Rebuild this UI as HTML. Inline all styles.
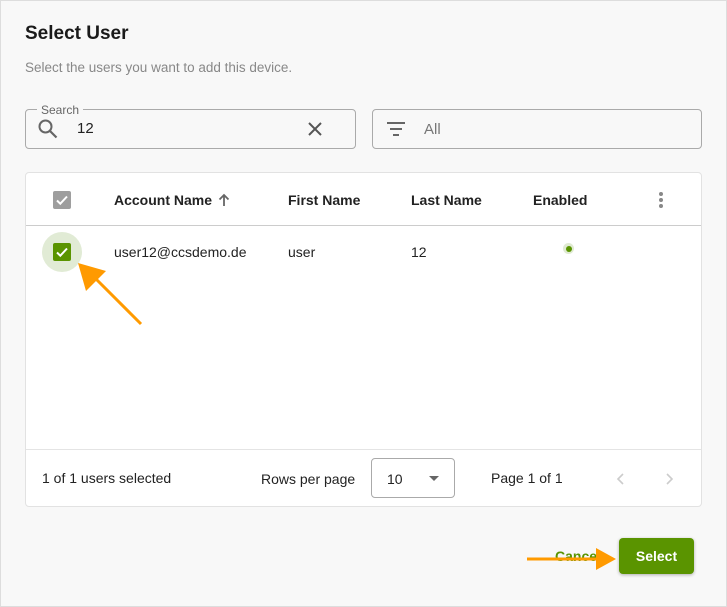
<!DOCTYPE html>
<html><head><style>
*{box-sizing:border-box;margin:0;padding:0}
body{width:727px;height:607px;background:#f8f8f8;font-family:"Liberation Sans",Arial,sans-serif;color:#222;position:relative;overflow:hidden}
.a{position:absolute}
.t{font-size:14px}
</style></head><body>
<div class="a" style="left:0;top:0;width:727px;height:607px;border:1px solid #ddd"></div>
<div class="a" style="left:25px;top:23px;font-size:19px;font-weight:bold;color:#1a1a1a">Select User</div>
<div class="a" style="left:25px;top:60px;font-size:13.5px;color:#888">Select the users you want to add this device.</div>

<div class="a" style="left:25px;top:109px;width:331px;height:40px;border:1px solid #aaa;border-radius:4px"></div>
<div class="a" style="left:37px;top:103px;padding:0 4px;background:#f8f8f8;font-size:12px;color:#666">Search</div>
<svg class="a" style="left:36px;top:117px" width="24" height="24" viewBox="0 0 24 24"><circle cx="9.5" cy="9.5" r="6" fill="none" stroke="#666" stroke-width="2"/><path d="M14 14l6.5 6.5" stroke="#666" stroke-width="2.2"/></svg>
<div class="a t" style="left:77px;top:120px;font-size:15px">12</div>
<svg class="a" style="left:305px;top:119px" width="20" height="20" viewBox="0 0 20 20"><path d="M4 4l12 12M16 4L4 16" stroke="#555" stroke-width="2"/></svg>

<div class="a" style="left:372px;top:109px;width:330px;height:40px;border:1px solid #aaa;border-radius:4px"></div>
<svg class="a" style="left:385px;top:119px" width="22" height="20" viewBox="0 0 22 20"><path d="M2 4h18M5 10h12M8 16h6" stroke="#666" stroke-width="2"/></svg>
<div class="a" style="left:424px;top:121px;font-size:15px;color:#777">All</div>

<div class="a" style="left:25px;top:172px;width:677px;height:335px;background:#fff;border:1px solid #e2e2e2;border-radius:4px"></div>
<div class="a" style="left:26px;top:225px;width:675px;height:1px;background:#ccc"></div>
<div class="a" style="left:26px;top:449px;width:675px;height:1px;background:#e4e4e4"></div>

<div class="a" style="left:53px;top:191px;width:18px;height:18px;background:#9e9e9e;border-radius:2px"></div>
<svg class="a" style="left:53px;top:191px" width="18" height="18" viewBox="0 0 18 18"><path d="M4 9.5l3.3 3.2L14 5.5" stroke="#fff" stroke-width="2" fill="none"/></svg>
<div class="a t" style="left:114px;top:192px;font-weight:bold">Account Name</div>
<svg class="a" style="left:217px;top:192px" width="14" height="16" viewBox="0 0 14 16"><path d="M7 14V3M2.5 7.5L7 3l4.5 4.5" stroke="#666" stroke-width="1.8" fill="none"/></svg>
<div class="a t" style="left:288px;top:192px;font-weight:bold">First Name</div>
<div class="a t" style="left:411px;top:192px;font-weight:bold">Last Name</div>
<div class="a t" style="left:533px;top:192px;font-weight:bold">Enabled</div>
<div class="a" style="left:659px;top:192px;width:4px">
<div style="width:4px;height:4px;border-radius:50%;background:#888;margin-bottom:2px"></div><div style="width:4px;height:4px;border-radius:50%;background:#888;margin-bottom:2px"></div><div style="width:4px;height:4px;border-radius:50%;background:#888"></div></div>

<div class="a" style="left:42px;top:232px;width:40px;height:40px;border-radius:50%;background:#e1ebd5"></div>
<div class="a" style="left:53px;top:243px;width:18px;height:18px;background:#5a9400;border-radius:2px"></div>
<svg class="a" style="left:53px;top:243px" width="18" height="18" viewBox="0 0 18 18"><path d="M4 9.5l3.3 3.2L14 5.5" stroke="#fff" stroke-width="2" fill="none"/></svg>
<div class="a t" style="left:114px;top:244px">user12@ccsdemo.de</div>
<div class="a t" style="left:288px;top:244px">user</div>
<div class="a t" style="left:411px;top:244px">12</div>
<div class="a" style="left:563px;top:243px;width:11px;height:11px;border-radius:50%;background:#dfead2"></div>
<div class="a" style="left:565.5px;top:245.5px;width:6px;height:6px;border-radius:50%;background:#5a9400"></div>

<svg class="a" style="left:70px;top:255px" width="80" height="75" viewBox="0 0 80 75"><path d="M71 69L22 20" stroke="#ff9a00" stroke-width="3"/><path d="M8 8l28 8-20 20z" fill="#ff9a00"/></svg>

<div class="a t" style="left:42px;top:470px">1 of 1 users selected</div>
<div class="a t" style="left:261px;top:471px">Rows per page</div>
<div class="a" style="left:371px;top:458px;width:84px;height:40px;border:1px solid #aaa;border-radius:4px"></div>
<div class="a t" style="left:387px;top:471px">10</div>
<div class="a" style="left:429px;top:476px;border-left:5px solid transparent;border-right:5px solid transparent;border-top:5px solid #666"></div>
<div class="a t" style="left:491px;top:470px">Page 1 of 1</div>
<svg class="a" style="left:614px;top:471px" width="14" height="16" viewBox="0 0 14 16"><path d="M9 3L4 8l5 5" stroke="#ccc" stroke-width="1.6" fill="none"/></svg>
<svg class="a" style="left:662px;top:471px" width="14" height="16" viewBox="0 0 14 16"><path d="M5 3l5 5-5 5" stroke="#ccc" stroke-width="1.6" fill="none"/></svg>

<div class="a" style="left:555px;top:548px;font-size:14px;font-weight:bold;color:#5a9400">Cancel</div>
<div class="a" style="left:619px;top:538px;width:75px;height:36px;background:#5a9400;border-radius:4px;box-shadow:0 1px 3px rgba(0,0,0,.3);color:#fff;font-weight:bold;font-size:14px;text-align:center;line-height:36px">Select</div>
<svg class="a" style="left:526px;top:546px" width="92" height="26" viewBox="0 0 92 26"><path d="M1 13h72" stroke="#ff9a00" stroke-width="3"/><path d="M70 2l20 11-20 11z" fill="#ff9a00"/></svg>
</body></html>
